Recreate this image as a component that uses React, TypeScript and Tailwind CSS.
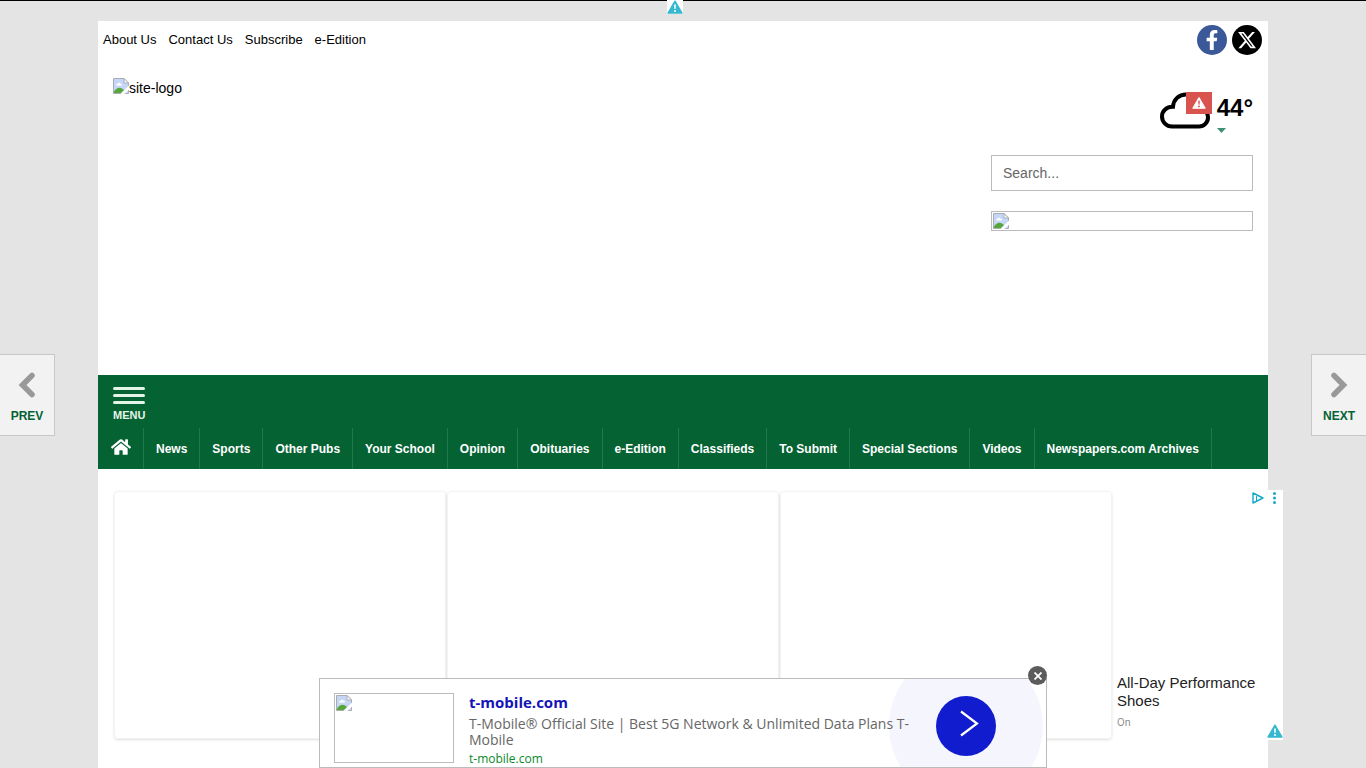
import React from 'react';
import { FaFacebookF, FaHome } from 'react-icons/fa';
import { FaXTwitter } from 'react-icons/fa6';

const topLinks = ['About Us', 'Contact Us', 'Subscribe', 'e-Edition'];

const sections = [
  'News',
  'Sports',
  'Other Pubs',
  'Your School',
  'Opinion',
  'Obituaries',
  'e-Edition',
  'Classifieds',
  'To Submit',
  'Special Sections',
  'Videos',
  'Newspapers.com Archives',
];

const MissingImage = () => (
  <svg className="w-4 h-4 shrink-0" viewBox="0 0 16 16" aria-hidden="true">
    <path d="M0.5 0.5h10.500l4.500 4.500v10.500h-15z" fill="#c6d6f6" stroke="#a9adb3" />
    <path d="M3 7.500c0-1.200.8-1.800 1.700-1.700C5 4.300 7.200 4.300 7.600 5.900c1 0 1.600.7 1.600 1.600z" fill="#fff" />
    <path d="M1 15v-1.500c2.500-3.500 5-4.500 8-3l2 1.500-3 3z" fill="#56a63c" />
    <path d="M11 0.500v4.500h4.500z" fill="#fff" stroke="#a9adb3" />
    <path d="M16 7.500L7.500 16h4L16 11.500z" fill="#fff" />
  </svg>
);

const AlertMark = ({ className }: { className: string }) => (
  <svg className={className} viewBox="0 0 16 14" aria-hidden="true">
    <path d="M8 1.200L15 13H1z" fill="currentColor" stroke="currentColor" strokeWidth="1.400" strokeLinejoin="round" />
    <path d="M7.100 4.500h1.800l-.3 4.500H7.400z" fill="#fff" />
    <circle cx="8" cy="11" r="1" fill="#fff" />
  </svg>
);

const TopBar = () => (
  <div className="flex items-center justify-between pl-[5px] pr-1.5 py-1">
    <nav className="flex gap-3 text-[13px] leading-5" aria-label="Site">
      {topLinks.map((label) => (
        <a key={label} href="#">
          {label}
        </a>
      ))}
    </nav>
    <div className="flex gap-[5px]">
      <a
        href="#"
        aria-label="Facebook"
        className="flex items-center justify-center w-[30px] h-[30px] rounded-full bg-[#3b5998] text-white"
      >
        <FaFacebookF size={20} />
      </a>
      <a
        href="#"
        aria-label="X"
        className="flex items-center justify-center w-[30px] h-[30px] rounded-full bg-black text-white"
      >
        <FaXTwitter size={20} />
      </a>
    </div>
  </div>
);

const Weather = () => (
  <a href="#" className="flex gap-[7px]" aria-label="Weather, 44 degrees">
    <div className="relative w-[50px] h-10">
      <svg className="w-[50px] h-10" viewBox="0 0 50 40" fill="none" aria-hidden="true">
        <path
          d="M12 35.500h27a9 9 0 0 0 9-9c0-5-4-9-9-9C39 9 33 3.500 26 3.500c-7 0-12.500 5-13 12.200C6.500 15.500 2 20 2 25.500c0 5.500 4.500 10 10 10z"
          stroke="#000"
          strokeWidth="4"
        />
      </svg>
      <span className="absolute top-px right-[-2px] flex items-center justify-center w-[26px] h-[22px] bg-[#d9534f]">
        <svg className="w-3.5 h-3" viewBox="0 0 16 14" aria-hidden="true">
          <path d="M8 1L15 13H1z" fill="#fff" stroke="#fff" strokeWidth="1.500" strokeLinejoin="round" />
          <path d="M7 4.500h2l-.4 4.500H7.400z" fill="#d9534f" />
          <circle cx="8" cy="11" r="1.100" fill="#d9534f" />
        </svg>
      </span>
    </div>
    <div>
      <div className="pt-px text-2xl leading-8 font-bold">44°</div>
      <svg className="w-[9px] h-[5px] mt-1" viewBox="0 0 9 5" aria-hidden="true">
        <path d="M0 0h9L4.500 5z" fill="#3f8f72" />
      </svg>
    </div>
  </a>
);

const Header = () => (
  <header className="flex justify-between min-h-[316px] px-[15px] pt-[19px]">
    <a href="#" className="flex items-start h-5 text-sm">
      <MissingImage />
      site-logo
    </a>
    <div className="flex flex-col items-end w-[262px] pt-[13px]">
      <Weather />
      <input
        type="search"
        aria-label="Search"
        placeholder="Search..."
        className="w-full h-9 mt-[22px] px-[11px] border border-[#bbb] text-sm placeholder:text-[#666]"
      />
      <a href="#" aria-label="Sponsor" className="flex w-full h-5 mt-5 px-px pt-px border border-[#bbb]">
        <MissingImage />
      </a>
    </div>
  </header>
);

const MainNav = () => (
  <div className="bg-[#046233] text-white">
    <button type="button" className="block ml-[15px] pt-3">
      <span className="flex flex-col gap-1">
        <span className="h-[3px] rounded-sm bg-[#e4f5e8]"></span>
        <span className="h-[3px] rounded-sm bg-[#e4f5e8]"></span>
        <span className="h-[3px] rounded-sm bg-[#e4f5e8]"></span>
      </span>
      <span className="block mt-1 text-[11px] leading-[14px] font-bold text-[#e4f5e8]">MENU</span>
    </button>
    <nav className="flex mt-[6px] text-xs font-bold" aria-label="Sections">
      <a href="#" aria-label="Home" className="flex items-center h-[41px] pl-[13px] pr-3 pb-1 border-r border-[#22774c]">
        <FaHome size={20} />
      </a>
      {sections.map((label) => (
        <a
          key={label}
          href="#"
          className="flex items-center h-[41px] px-3 border-r border-[#22774c] whitespace-nowrap"
        >
          {label}
        </a>
      ))}
    </nav>
  </div>
);

const AdRow = () => (
  <div className="flex h-[250px] mt-[21px] ml-[15px] mr-[-15px] bg-white">
    <div className="flex flex-1 gap-px pl-px pr-[5px] py-px">
      <div className="flex-1 rounded border border-[#f3f3f3] shadow-sm"></div>
      <div className="flex-1 rounded border border-[#f3f3f3] shadow-sm"></div>
      <div className="flex-1 rounded border border-[#f3f3f3] shadow-sm"></div>
    </div>
    <div className="flex flex-col justify-between w-[166px]">
      <div className="flex justify-end gap-1.5 pt-0.5 pr-1">
        <svg className="w-3 h-3" viewBox="0 0 12 12" fill="none" stroke="#16a9c6" aria-hidden="true">
          <path d="M1 1l10 5-10 5z" strokeWidth="1.400" strokeLinejoin="round" />
          <path d="M4.500 4v5" />
        </svg>
        <svg className="w-[9px] h-3" viewBox="0 0 9 12" fill="#16a9c6" aria-hidden="true">
          <circle cx="4.500" cy="1.500" r="1.500" />
          <circle cx="4.500" cy="6" r="1.500" />
          <circle cx="4.500" cy="10.500" r="1.500" />
        </svg>
      </div>
      <div className="flex items-end justify-between">
        <a href="#" className="pb-2.5 text-[#222]">
          <span className="block text-[15px] leading-[18px]">All-Day Performance Shoes</span>
          <span className="block mt-1 text-[10px] leading-4 text-[#888] font-['Inter',sans-serif]">On</span>
        </a>
        <AlertMark className="w-4 h-3.5 mb-0.5 shrink-0 text-[#35b8d0]" />
      </div>
    </div>
  </div>
);

const PageArrow = ({ label, side, d }: { label: string; side: string; d: string }) => (
  <button
    type="button"
    className={`fixed top-[354px] flex flex-col items-center w-[55px] h-[82px] pt-4 bg-[#f2f2f2] border border-[#c8c8c8] ${side}`}
  >
    <svg className="w-7 h-7" viewBox="0 0 28 28" fill="none" aria-hidden="true">
      <path d={d} stroke="#999" strokeWidth="5.500" strokeLinecap="round" />
    </svg>
    <span className="mt-[9px] text-xs leading-4 font-bold text-[#046233]">{label}</span>
  </button>
);

const BottomAd = () => (
  <aside className="fixed bottom-0 left-1/2 w-[728px] h-[90px] -translate-x-1/2">
    <div className="flex h-full pl-3.5 border border-[#bbb] bg-white overflow-hidden">
      <div className="w-[120px] h-[70px] mt-3.5 p-px border border-[#bbb] shrink-0">
        <MissingImage />
      </div>
      <div className="relative z-10 w-[442px] shrink-0 ml-[15px] pt-[13px] font-['Open_Sans',sans-serif]">
        <a href="#" className="block text-[15px] leading-5 font-bold text-[#1414b8]">
          t-mobile.com
        </a>
        <p className="mt-1 text-sm leading-4 text-[#666]">
          T-Mobile® Official Site | Best 5G Network &amp; Unlimited Data Plans T-Mobile
        </p>
        <a href="#" className="block mt-[3px] text-xs leading-4 text-[#0a8a2a]">
          t-mobile.com
        </a>
      </div>
      <div className="flex items-center justify-center self-center w-[154px] h-[154px] -ml-[22px] mt-[5px] rounded-full bg-[#f5f5fd] shrink-0">
        <button
          type="button"
          aria-label="Open"
          className="flex items-center justify-center w-[60px] h-[60px] rounded-full bg-[#101ccd]"
        >
          <svg className="w-8 h-8" viewBox="0 0 32 32" fill="none" aria-hidden="true">
            <path d="M11 1.500l16 12-16 12" stroke="#fff" strokeWidth="2.200" />
          </svg>
        </button>
      </div>
    </div>
    <button
      type="button"
      aria-label="Close"
      className="absolute right-0 top-[-12px] flex items-center justify-center w-[19px] h-[19px] rounded-full bg-[#5c5c5c]"
    >
      <svg className="w-2 h-2" viewBox="0 0 8 8" aria-hidden="true">
        <path d="M0.500 0.500l7 7M7.500 0.500l-7 7" stroke="#fff" strokeWidth="1.800" />
      </svg>
    </button>
  </aside>
);

const App = () => {
  return (
    <div className="h-screen overflow-hidden bg-[#e4e4e4] border-t border-black text-black font-['Liberation_Sans',Arial,sans-serif]">
      <span className="absolute top-0 left-1/2 -ml-4 flex justify-center w-4 h-3.5 bg-white">
        <AlertMark className="w-4 h-3.5 text-[#35b8d0]" />
      </span>
      <div className="max-w-[1170px] min-h-screen mx-auto mt-5 bg-white">
        <TopBar />
        <Header />
        <MainNav />
        <AdRow />
      </div>
      <PageArrow label="PREV" side="left-0 border-l-0" d="M19 4.500L9.500 14l9.500 9.500" />
      <PageArrow label="NEXT" side="right-0 border-r-0" d="M9 4.500l9.500 9.500L9 23.500" />
      <BottomAd />
    </div>
  );
};

export default App;
